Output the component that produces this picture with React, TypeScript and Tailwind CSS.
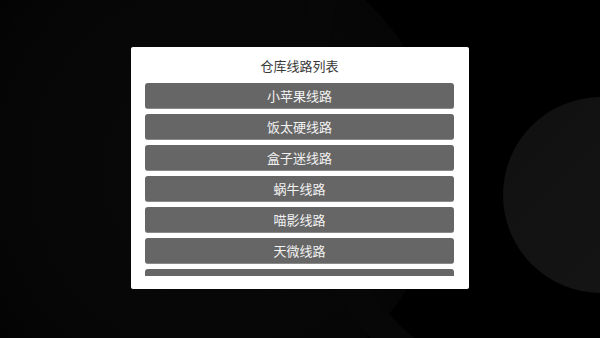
import React from "react";

const items = ["小苹果线路", "饭太硬线路", "盒子迷线路", "蜗牛线路", "喵影线路", "天微线路", "肥猫线路"];

export default function App() {
  return (
    <div
      className="relative w-[600px] h-[338px] overflow-hidden bg-black flex items-start justify-center"
      style={{ fontFamily: '"Noto Sans CJK SC", "Noto Sans", sans-serif' }}
    >
      {/* background decoration */}
      <div className="absolute left-[-120px] top-[-60px] w-[560px] h-[460px] rounded-full bg-[radial-gradient(circle_at_60%_50%,#0a0a0a,#050505_60%,#000_75%)]" />
      <div className="absolute left-[300px] top-[-200px] w-[520px] h-[620px] rounded-full border-[30px] border-[#070707]" />
      <div className="absolute left-[503px] top-[97px] w-[200px] h-[196px] rounded-full bg-[linear-gradient(135deg,#101010,#161616)]" />

      <div className="relative mt-[47px] w-[338px] h-[242px] bg-white rounded-[2px] flex flex-col px-[14px] pr-[15px]">
        <div className="h-[36px] pt-[10px] text-center text-[13px] leading-[18px] text-[#3a3a3a]">
          仓库线路列表
        </div>
        <div className="h-[193px] overflow-hidden flex flex-col gap-[5px]">
          {items.map((t) => (
            <div
              key={t}
              className="shrink-0 h-[26px] rounded-[3px] bg-[#666666] border-b border-[#8a8a8a] flex items-center justify-center text-[13px] text-[#f2f2f2]"
            >
              {t}
            </div>
          ))}
        </div>
      </div>
    </div>
  );
}
